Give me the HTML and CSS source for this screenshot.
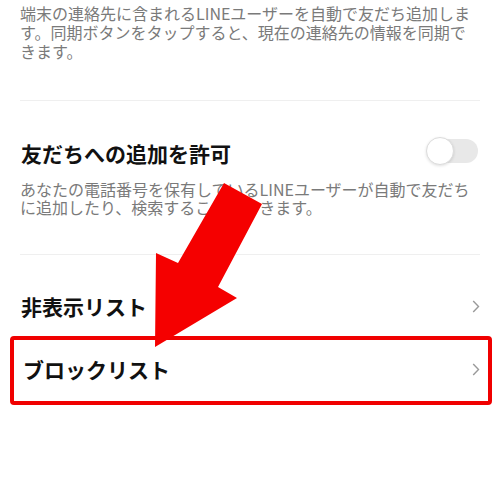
FILE: index.html
```html
<!DOCTYPE html>
<html lang="ja">
<head>
  <meta charset="utf-8">
  <meta name="viewport" content="width=device-width, initial-scale=1.0">
  <title>友だち設定</title>
  <link rel="stylesheet" href="styles.css">
</head>
<body>
  <div class="page">

    <!-- contact sync note -->
    <p class="intro">端末の連絡先に含まれるLINEユーザーを自動で友だち追加します。同期ボタンをタップすると、現在の連絡先の情報を同期できます。</p>
    <div class="divider"></div>

    <!-- allow adding -->
    <div class="setting-row">
      <span class="title">友だちへの追加を許可</span>
      <div class="toggle"><span class="knob"></span></div>
    </div>
    <p class="note">あなたの電話番号を保有しているLINEユーザーが自動で友だちに追加したり、検索することができます。</p>
    <div class="divider second"></div>

    <!-- lists -->
    <div class="list-item">
      <span class="title">非表示リスト</span>
      <svg class="chev" width="8" height="13" viewBox="0 0 8 13"><path d="M1.2 1 L6.5 6.5 L1.2 12" fill="none" stroke="#9a9a9a" stroke-width="1.4"/></svg>
    </div>
    <div class="list-item boxed">
      <span class="title">ブロックリスト</span>
      <svg class="chev" width="8" height="13" viewBox="0 0 8 13"><path d="M1.2 1 L6.5 6.5 L1.2 12" fill="none" stroke="#9a9a9a" stroke-width="1.4"/></svg>
    </div>

    <!-- pointer arrow drawn over the page -->
    <svg class="arrow" width="500" height="497" viewBox="0 0 500 497">
      <polygon points="224,183 262,204 218,287 237,298 155,347 156,253 178,263" fill="#f50000"/>
    </svg>
  </div>
</body>
</html>
```

FILE: styles.css
```css
* {
  box-sizing: border-box;
  margin: 0;
  padding: 0;
}

body {
  font-family: "Noto Sans CJK JP", "Noto Sans", sans-serif;
  background: #fff;
  width: 500px;
  height: 497px;
  overflow: hidden;
}

.page {
  position: relative;
  height: 100%;
  padding: 0 20px;
}

.intro {
  padding-top: 4px;
  font-size: 16px;
  line-height: 19px;
  color: #7a7a7a;
}

.divider {
  height: 1px;
  background: #efefef;
  margin-top: 39px;
}

.divider.second {
  margin-top: 38px;
}

.setting-row {
  display: flex;
  align-items: center;
  justify-content: space-between;
  height: 30px;
  margin-top: 37px;
}

.title {
  font-size: 21px;
  line-height: 30px;
  font-weight: bold;
  color: #111;
  padding-left: 1px;
}

.toggle {
  display: flex;
  align-items: center;
  width: 51px;
  height: 24px;
  margin-right: 2px;
  margin-top: -4px;
  border-radius: 12px;
  background: #e8e8e8;
}

.knob {
  width: 28px;
  height: 28px;
  margin-left: -1px;
  border-radius: 50%;
  background: #fff;
  border: 1px solid #dcdcdc;
  box-shadow: 0 1px 3px rgba(0, 0, 0, 0.12);
}

.note {
  margin-top: 12px;
  font-size: 16px;
  line-height: 18px;
  color: #7a7a7a;
}

.list-item {
  display: flex;
  align-items: center;
  justify-content: space-between;
  height: 30px;
  margin-top: 36px;
}

.list-item .chev {
  margin-top: 1px;
}

.list-item.boxed {
  height: 69px;
  margin: 15px -12px 0 -10px;
  padding: 14px 8px 17px 8px;
  border: 4px solid #f00000;
  border-radius: 4px;
}

.arrow {
  position: absolute;
  top: 0;
  left: 0;
  pointer-events: none;
}
```
